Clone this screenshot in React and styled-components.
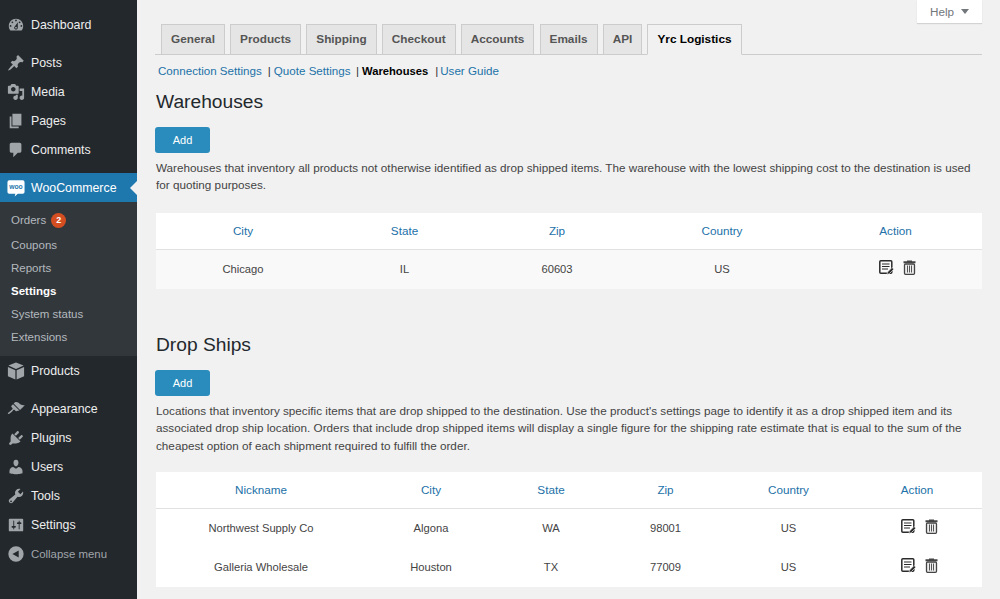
import React from "react";
import styled, { createGlobalStyle } from "styled-components";

const Global = createGlobalStyle`
  html, body { margin: 0; padding: 0; height: 100%; background: #f1f1f1; overflow: hidden; }
  body { font-family: "Liberation Sans", Arial, sans-serif; font-size: 13px; color: #444; }
`;
const Shell = styled.div`display: flex; width: 1000px; height: 599px; overflow: hidden; background: #f1f1f1;`;
const Side = styled.nav`width: 137px; flex: none; background: #23282d; padding-top: 10px; height: 599px; box-sizing: border-box;`;
const Item = styled.div`
  display: flex; align-items: center; height: 29px; color: #eee; font-size: ${p => p.$dim ? 11.4 : 12.35}px; padding-left: 7px; gap: 6px;
  margin-bottom: ${p => p.$mb || 0}px; position: relative;
  background: ${p => p.$active ? "#1f78ad" : "transparent"};
  ${p => p.$active ? "color:#fff;" : ""}
  ${p => p.$dim ? "color:#a0a5aa;" : ""}
  svg { width: 18px; height: 18px; flex: none; fill: ${p => p.$active ? "#fff" : "#a0a5aa"}; }
`;
const Notch = styled.span`position: absolute; right: 0; top: 8px; border: 7px solid transparent; border-right-color: #f1f1f1; border-left: 0;`;
const Sub = styled.div`background: #32373c; padding: 5px 0 8px;`;
const SubItem = styled.div`height: ${p => p.$h || 23}px; font-size: 11.5px; padding-left: 11px; color: ${p => p.$on ? "#fff" : "#b4b9be"}; font-weight: ${p => p.$on ? 700 : 400}; display: flex; align-items: center; gap: 5px;`;
const Badge = styled.span`width: 15px; height: 15px; border-radius: 50%; background: #d54e21; color: #fff; font-size: 9px; font-weight: 700; display: flex; align-items: center; justify-content: center;`;
const Main = styled.main`flex: 1; position: relative; padding: 24px 18px 0 18px; min-width: 0;`;
const Help = styled.div`position: absolute; top: 0; right: 18px; width: 65px; height: 23px; background: #fff; box-shadow: 0 1px 1px rgba(0,0,0,.12); color: #72777c; font-size: 11.7px; display: flex; align-items: center; justify-content: center; gap: 7px;`;
const Caret = styled.span`border: 4px solid transparent; border-top: 5px solid #72777c; border-bottom: 0;`;
const Tabs = styled.div`display: flex; gap: 5.1px; padding-left: 6px; height: 31px; box-sizing: border-box; border-bottom: 1px solid #ccc;`;
const Tab = styled.div`
  box-sizing: border-box; padding: 0 9px 1px; border: 1px solid #ccc; border-bottom: ${p => p.$on ? "1px solid #f1f1f1" : "0"}; height: ${p => p.$on ? 31 : 30}px;
  background: ${p => p.$on ? "#f1f1f1" : "#e5e5e5"}; color: ${p => p.$on ? "#000" : "#555"}; font-weight: 700; font-size: 11.8px; display: flex; align-items: center;
`;
const SubNav = styled.div`display: flex; align-items: baseline; font-size: 11.7px; color: #333; padding: 8px 0 0 3px; height: 16px; line-height: 15px;`;
const LinkA = styled.span`color: ${p => p.$on ? "#000" : "#2271a8"}; font-weight: ${p => p.$on ? 700 : 400}; font-size: ${p => p.$on ? 11.2 : 11.6}px; margin: 0 ${p => p.$mr || 0}px 0 ${p => p.$ml || 0}px;`;
const Content = styled.div`padding-left: 1px;`;
const H2 = styled.h2`font-size: 19.2px; font-weight: 400; color: #23282d; margin: 0; line-height: 26px; padding-top: ${p => p.$pt}px;`;
const Add = styled.div`width: 55px; height: 26px; margin: ${p => p.$mt}px 0 0 -1px; border-radius: 3px; background: #2a8cbc; color: #fff; font-size: 11px; display: flex; align-items: center; justify-content: center;`;
const Para = styled.p`margin: 5.5px 0 0; font-size: 11.7px; letter-spacing: .012px; line-height: 17.5px; color: #444;`;
const Table = styled.div`background: #fff; margin-top: ${p => p.$mt}px;`;
const Row = styled.div`display: grid; box-sizing: border-box; padding-bottom: 2px; grid-template-columns: ${p => p.$cols}; align-items: center; height: ${p => p.$h}px; text-align: center; font-size: ${p => p.$head ? 11.7 : 11.2}px; color: ${p => p.$head ? "#2271a8" : "#444"}; ${p => p.$head ? "border-bottom:1px solid #e1e1e1;" : ""} background: ${p => p.$alt ? "#f9f9f9" : "#fff"};`;
const Actions = styled.div`display: flex; justify-content: center; gap: 8px; padding-left: 5px; margin-bottom: 2px; svg { width: 15px; height: 15px; }`;

const Edit = () => <svg viewBox="0 0 15 15"><rect x=".8" y=".8" width="12" height="12.400" rx="1" fill="none" stroke="#2b2b2b" strokeWidth="1.500"/><path d="M3 3.500h7.500v1.100H3zM3 6h7.500v1.100H3zM3 8.500h6v1.100H3z" fill="#2b2b2b"/><path d="M13 7.500l1.800 1.700-4.600 4.600-2.200.6.500-2.300z" fill="#2b2b2b" stroke="#fff" strokeWidth=".6"/></svg>;
const Trash = () => <svg viewBox="0 0 15 15"><path d="M5 1.200V.5h5v.7h3.500v2h-12v-2z" fill="#444"/><rect x="2.500" y="4" width="10" height="10.300" rx="1" fill="#eee" stroke="#444" strokeWidth="1.300"/><path d="M5 5.500h1v7H5zM7 5.500h1v7H7zM9 5.500h1v7H9z" fill="#555"/></svg>;

const icons = {
  dash: <svg viewBox="0 0 20 20"><path d="M3.760 16h12.480c1.100-1.370 1.760-3.110 1.760-5 0-4.420-3.580-8-8-8s-8 3.580-8 8c0 1.890.66 3.630 1.760 5zM10 4c.55 0 1 .45 1 1s-.45 1-1 1-1-.45-1-1 .45-1 1-1zM6 6c.55 0 1 .45 1 1s-.45 1-1 1-1-.45-1-1 .45-1 1-1zm8 0c.55 0 1 .45 1 1s-.45 1-1 1-1-.45-1-1 .45-1 1-1zm-5.370 5.550L12 7v6c0 1.100-.9 2-2 2s-2-.9-2-2c0-.57.24-1.080.63-1.450zM4 10c.55 0 1 .45 1 1s-.45 1-1 1-1-.45-1-1 .45-1 1-1zm12 0c.55 0 1 .45 1 1s-.45 1-1 1-1-.45-1-1 .45-1 1-1zm-5 3c0-.55-.45-1-1-1s-1 .45-1 1 .45 1 1 1 1-.45 1-1z" fillRule="evenodd"/></svg>,
  pin: <svg viewBox="0 0 20 20"><path d="M10.440 3.020l1.820-1.820 6.360 6.350-1.830 1.820c-1.050-.68-2.480-.57-3.410.36l-.75.75c-.92.93-1.040 2.350-.35 3.410l-1.830 1.820-2.410-2.410-2.800 2.790c-.42.42-3.380 2.710-3.800 2.290s1.860-3.390 2.280-3.810l2.790-2.790L4.100 9.360l1.830-1.820c1.050.69 2.480.57 3.400-.36l.75-.75c.93-.92 1.050-2.350.36-3.410z"/></svg>,
  media: <svg viewBox="0 0 20 20"><path d="M13 11V4c0-.55-.45-1-1-1h-1.670L9 1H5L3.670 3H2c-.55 0-1 .45-1 1v7c0 .55.45 1 1 1h10c.55 0 1-.45 1-1zM7 4.500c1.380 0 2.500 1.120 2.500 2.500S8.380 9.500 7 9.500 4.500 8.380 4.500 7 5.620 4.500 7 4.500zM14 6h5v10.500c0 1.380-1.120 2.500-2.500 2.500S14 17.880 14 16.500s1.120-2.500 2.500-2.500c.17 0 .34.020.5.050V9h-3V6zm-4 8.050V13h2v3.500c0 1.380-1.120 2.500-2.500 2.500S7 17.880 7 16.500 8.120 14 9.500 14c.17 0 .34.020.5.050z" fillRule="evenodd"/></svg>,
  pages: <svg viewBox="0 0 20 20"><path d="M6 15V2h10v13H6zm-1 1h8v2H3V5h2v11z"/></svg>,
  comment: <svg viewBox="0 0 20 20"><path d="M5 2h9c1.100 0 2 .9 2 2v7c0 1.100-.9 2-2 2h-2l-5 5v-5H5c-1.100 0-2-.9-2-2V4c0-1.100.9-2 2-2z"/></svg>,
  woo: <svg viewBox="0 0 20 20"><path d="M2.500 1.500h15A2 2 0 0 1 19.500 3.500v11a2 2 0 0 1-2 2h-5.500l-3.500 3 .8-3H2.500a2 2 0 0 1-2-2v-11a2 2 0 0 1 2-2z"/><text x="10" y="11.500" textAnchor="middle" fontSize="7.500" fontWeight="700" fontFamily="Liberation Sans" fill="#1f78ad">woo</text></svg>,
  box: <svg viewBox="0 0 20 20"><path d="M10 .5l8.500 3.500L10 7.700 1.500 4zM1 5.500l8.300 3.700v10.300L1 15.700zM19 5.500v10.200l-8.300 3.800V9.200z"/></svg>,
  brush: <svg viewBox="0 0 20 20"><path d="M14.480 11.060L7.410 3.990l1.500-1.500c.5-.56 2.300-.47 3.510.32 1.210.8 1.430 1.280 2.910 2.100 1.180.64 2.450 1.260 4.450.85zm-.71.71L6.700 4.700 4.930 6.470c-.39.39-.39 1.020 0 1.410l1.060 1.060c.39.39.39 1.030 0 1.420-.6.6-1.430 1.150-2.210 1.930-.54.54-3.300 2.300-2.750 3.100.63.9 3.300-1.300 4.100-2.100.78-.78 1.330-1.610 1.930-2.210.39-.39 1.030-.39 1.420 0l1.060 1.060c.39.39 1.020.39 1.410 0z"/></svg>,
  plug: <svg viewBox="0 0 20 20"><path d="M13.110 4.360L9.870 7.600 8 5.730l3.240-3.240c.35-.34 1.050-.2 1.560.32.52.51.66 1.210.31 1.550zm-8 1.770l.91-1.120 9.010 9.010-1.190.84c-.71.71-2.630 1.160-3.820 1.160H6.140L4.900 17.260c-.59.59-1.540.59-2.120 0-.59-.58-.59-1.530 0-2.120l1.240-1.240v-3.880c0-1.130.4-3.190 1.090-3.890zm7.260 3.970l3.240-3.240c.34-.35 1.040-.21 1.550.31.52.51.66 1.210.31 1.550l-3.240 3.250z"/></svg>,
  user: <svg viewBox="0 0 20 20"><path d="M10 9.250c-2.270 0-2.730-3.440-2.730-3.440C7 4.020 7.820 2 9.970 2c2.160 0 2.980 2.020 2.710 3.810 0 0-.41 3.440-2.680 3.440zm0 2.570L12.720 10c2.390 0 4.520 2.330 4.520 4.530v2.490s-3.650 1.130-7.240 1.130c-3.650 0-7.240-1.130-7.240-1.130v-2.490c0-2.250 1.940-4.480 4.150-4.480z"/></svg>,
  wrench: <svg viewBox="0 0 20 20"><path d="M16.680 9.770c-1.340 1.340-3.300 1.670-4.950.99l-5.410 6.520c-.99.99-2.590.99-3.580 0s-.99-2.590 0-3.570l6.520-5.420c-.68-1.650-.35-3.610.99-4.950 1.280-1.280 3.120-1.620 4.720-1.060l-2.890 2.890 2.820 2.820 2.860-2.870c.53 1.580.18 3.400-1.080 4.670zM3.810 16.740c.39.39 1.030.39 1.420 0 .39-.39.39-1.030 0-1.420-.39-.39-1.030-.39-1.420 0-.39.39-.39 1.030 0 1.420z" fillRule="evenodd"/></svg>,
  sliders: <svg viewBox="0 0 20 20"><path d="M18 16V4c0-.55-.45-1-1-1H3c-.55 0-1 .45-1 1v12c0 .55.45 1 1 1h14c.55 0 1-.45 1-1zM8 11h1c.55 0 1 .45 1 1s-.45 1-1 1H8v1.500c0 .28-.22.5-.5.5s-.5-.22-.5-.5V13H6c-.55 0-1-.45-1-1s.45-1 1-1h1V5.500c0-.28.22-.5.5-.5s.5.22.5.5V11zm5-2h-1c-.55 0-1-.45-1-1s.45-1 1-1h1V5.500c0-.28.22-.5.5-.5s.5.22.5.5V7h1c.55 0 1 .45 1 1s-.45 1-1 1h-1v5.500c0 .28-.22.5-.5.5s-.5-.22-.5-.5V9z" fillRule="evenodd"/></svg>,
  collapse: <svg viewBox="0 0 20 20"><path d="M10 1.500a8.500 8.500 0 1 0 0 17 8.500 8.500 0 0 0 0-17zM13 6v8l-7-4z" fillRule="evenodd"/></svg>,
};

const MenuItem = ({ icon, label, ...p }) => <Item {...p}>{icons[icon]}<span>{label}</span>{p.$active && <Notch />}</Item>;

const COLS1 = "174px 149px 156px 174px 173px";
const COLS2 = "210px 130px 110px 119px 127px 130px";

export default function App() {
  return (
    <Shell>
      <Global />
      <Side>
        <MenuItem icon="dash" label="Dashboard" $mb={9} />
        <MenuItem icon="pin" label="Posts" />
        <MenuItem icon="media" label="Media" />
        <MenuItem icon="pages" label="Pages" />
        <MenuItem icon="comment" label="Comments" $mb={9} />
        <MenuItem icon="woo" label="WooCommerce" $active />
        <Sub>
          <SubItem $h={26}>Orders <Badge>2</Badge></SubItem>
          <SubItem>Coupons</SubItem>
          <SubItem>Reports</SubItem>
          <SubItem $on>Settings</SubItem>
          <SubItem>System status</SubItem>
          <SubItem>Extensions</SubItem>
        </Sub>
        <MenuItem icon="box" label="Products" $mb={9} />
        <MenuItem icon="brush" label="Appearance" />
        <MenuItem icon="plug" label="Plugins" />
        <MenuItem icon="user" label="Users" />
        <MenuItem icon="wrench" label="Tools" />
        <MenuItem icon="sliders" label="Settings" />
        <MenuItem icon="collapse" label="Collapse menu" $dim />
      </Side>
      <Main>
        <Help>Help <Caret /></Help>
        <Tabs>
          <Tab>General</Tab><Tab>Products</Tab><Tab>Shipping</Tab><Tab>Checkout</Tab><Tab>Accounts</Tab><Tab>Emails</Tab><Tab>API</Tab><Tab $on>Yrc Logistics</Tab>
        </Tabs>
        <SubNav>
          <LinkA $mr={6}>Connection Settings</LinkA>|<LinkA $ml={3} $mr={5.5}>Quote Settings</LinkA>|<LinkA $on $ml={3} $mr={7}>Warehouses</LinkA>|<LinkA $ml={2}>User Guide</LinkA>
        </SubNav>
        <Content>
          <H2 $pt={10}>Warehouses</H2>
          <Add $mt={12}>Add</Add>
          <Para>Warehouses that inventory all products not otherwise identified as drop shipped items. The warehouse with the lowest shipping cost to the destination is used for quoting purposes.</Para>
          <Table $mt={19.5}>
            <Row $head $h={37} $cols={COLS1}><div>City</div><div>State</div><div>Zip</div><div>Country</div><div>Action</div></Row>
            <Row $alt $h={39} $cols={COLS1}><div>Chicago</div><div>IL</div><div>60603</div><div>US</div><Actions><Edit /><Trash /></Actions></Row>
          </Table>
          <H2 $pt={43}>Drop Ships</H2>
          <Add $mt={12}>Add</Add>
          <Para>Locations that inventory specific items that are drop shipped to the destination. Use the product's settings page to identify it as a drop shipped item and its associated drop ship location. Orders that include drop shipped items will display a single figure for the shipping rate estimate that is equal to the sum of the cheapest option of each shipment required to fulfill the order.</Para>
          <Table $mt={18}>
            <Row $head $h={37} $cols={COLS2}><div>Nickname</div><div>City</div><div>State</div><div>Zip</div><div>Country</div><div>Action</div></Row>
            <Row $h={39} $cols={COLS2}><div>Northwest Supply Co</div><div>Algona</div><div>WA</div><div>98001</div><div>US</div><Actions><Edit /><Trash /></Actions></Row>
            <Row $h={39} $cols={COLS2}><div>Galleria Wholesale</div><div>Houston</div><div>TX</div><div>77009</div><div>US</div><Actions><Edit /><Trash /></Actions></Row>
          </Table>
        </Content>
      </Main>
    </Shell>
  );
}
